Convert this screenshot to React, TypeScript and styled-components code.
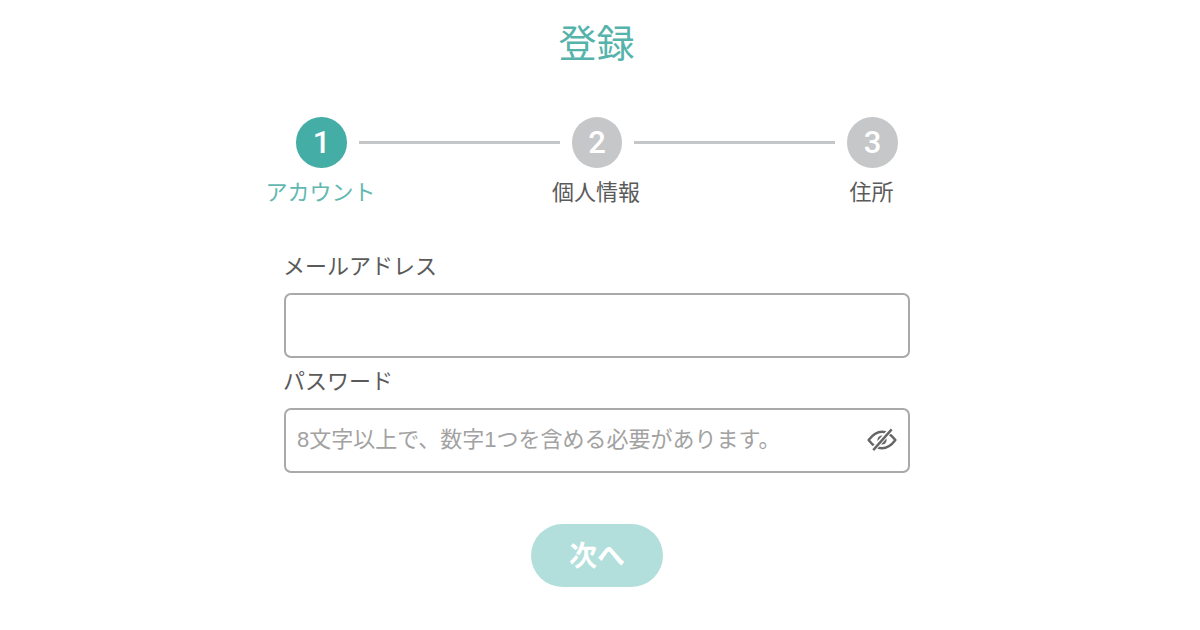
import React from "react";
import styled, { createGlobalStyle } from "styled-components";

const Global = createGlobalStyle`
  html, body { margin: 0; padding: 0; background: #fff; }
  body { font-family: "Liberation Sans", "Noto Sans CJK JP", sans-serif; }
  * { box-sizing: border-box; }
`;

const Page = styled.main`
  width: 1200px;
  height: 630px;
  overflow: hidden;
  display: flex;
  flex-direction: column;
  align-items: center;
  padding-top: 17px;
`;

const Title = styled.h1`
  margin: 0 0 0 -7px;
  font-size: 38px;
  line-height: 54px;
  font-weight: 400;
  color: #55b3ab;
`;

const Stepper = styled.ol`
  list-style: none;
  display: flex;
  align-items: flex-start;
  margin: 46px 0 0 -6px;
  padding: 0;
`;

const Step = styled.li`
  width: 50.5px;
  display: flex;
  flex-direction: column;
  align-items: center;
`;

const Circle = styled.span<{ $active?: boolean }>`
  width: 50.5px;
  height: 50.5px;
  border-radius: 50%;
  display: flex;
  align-items: center;
  justify-content: center;
  color: #fff;
  font-family: Roboto, sans-serif;
  font-weight: 500;
  font-size: 31px;
  background: ${(p) => (p.$active ? "#44aea6" : "#c5c7c9")};
`;

const StepLabel = styled.span<{ $active?: boolean }>`
  margin: 9px 0 0 -2px;
  white-space: nowrap;
  font-size: 22px;
  line-height: 32px;
  color: ${(p) => (p.$active ? "#62b8b0" : "#5a5a5a")};
`;

const Connector = styled.span`
  flex: 0 0 201px;
  height: 3px;
  margin: 24px 12px 0;
  background: #c4c6c7;
`;

const Form = styled.form`
  width: 626px;
  margin: 41px 0 0 0;
  transform: translateX(-3px);
  display: flex;
  flex-direction: column;
`;

const Label = styled.label`
  font-size: 22px;
  line-height: 34px;
  height: 43px;
  margin-left: -1px;
  color: #5a5a5a;
`;

const Field = styled.div`
  height: 65px;
  margin-bottom: 7px;
  padding: 0 11px;
  border: 2px solid #a9a9a9;
  border-radius: 7px;
  display: flex;
  align-items: center;
  justify-content: space-between;
`;

const Input = styled.input`
  flex: 1;
  min-width: 0;
  border: 0;
  outline: 0;
  padding: 0;
  background: transparent;
  font: inherit;
  font-size: 22px;
  &::placeholder { color: #a2a2a2; opacity: 1; }
`;

const EyeButton = styled.span`
  display: flex;
  color: #666;
`;

const Submit = styled.button`
  align-self: center;
  width: 132px;
  height: 63px;
  margin-top: 44px;
  padding: 0 0 3px;
  border: 0;
  border-radius: 32px;
  background: #b2dfdb;
  color: #fff;
  font: inherit;
  font-size: 28px;
  font-weight: 700;
`;

const EyeOff = () => (
  <svg width="30" height="24" viewBox="0 0 32 26" fill="none" stroke="currentColor" strokeWidth="2.6">
    <path d="M1.5 13 C6 7 11 4 16 4 C21 4 26 7 30.5 13 C26 19 21 22 16 22 C11 22 6 19 1.5 13 Z" strokeLinejoin="round" />
    <circle cx="16" cy="13" r="5" fill="currentColor" stroke="none" />
    <path d="M26 1.5 L6 24" stroke="#fff" strokeWidth="5.5" />
    <path d="M26.5 1.5 L6.5 24" />
  </svg>
);

const steps = ["アカウント", "個人情報", "住所"];

export default function App() {
  return (
    <Page>
      <Global />
      <Title>登録</Title>
      <Stepper>
        {steps.map((s, i) => (
          <React.Fragment key={s}>
            {i > 0 && <Connector />}
            <Step>
              <Circle $active={i === 0}>{i + 1}</Circle>
              <StepLabel $active={i === 0}>{s}</StepLabel>
            </Step>
          </React.Fragment>
        ))}
      </Stepper>
      <Form>
        <Label>メールアドレス</Label>
        <Field>
          <Input type="email" />
        </Field>
        <Label>パスワード</Label>
        <Field>
          <Input type="password" placeholder="8文字以上で、数字1つを含める必要があります。" />
          <EyeButton><EyeOff /></EyeButton>
        </Field>
        <Submit type="button">次へ</Submit>
      </Form>
    </Page>
  );
}
